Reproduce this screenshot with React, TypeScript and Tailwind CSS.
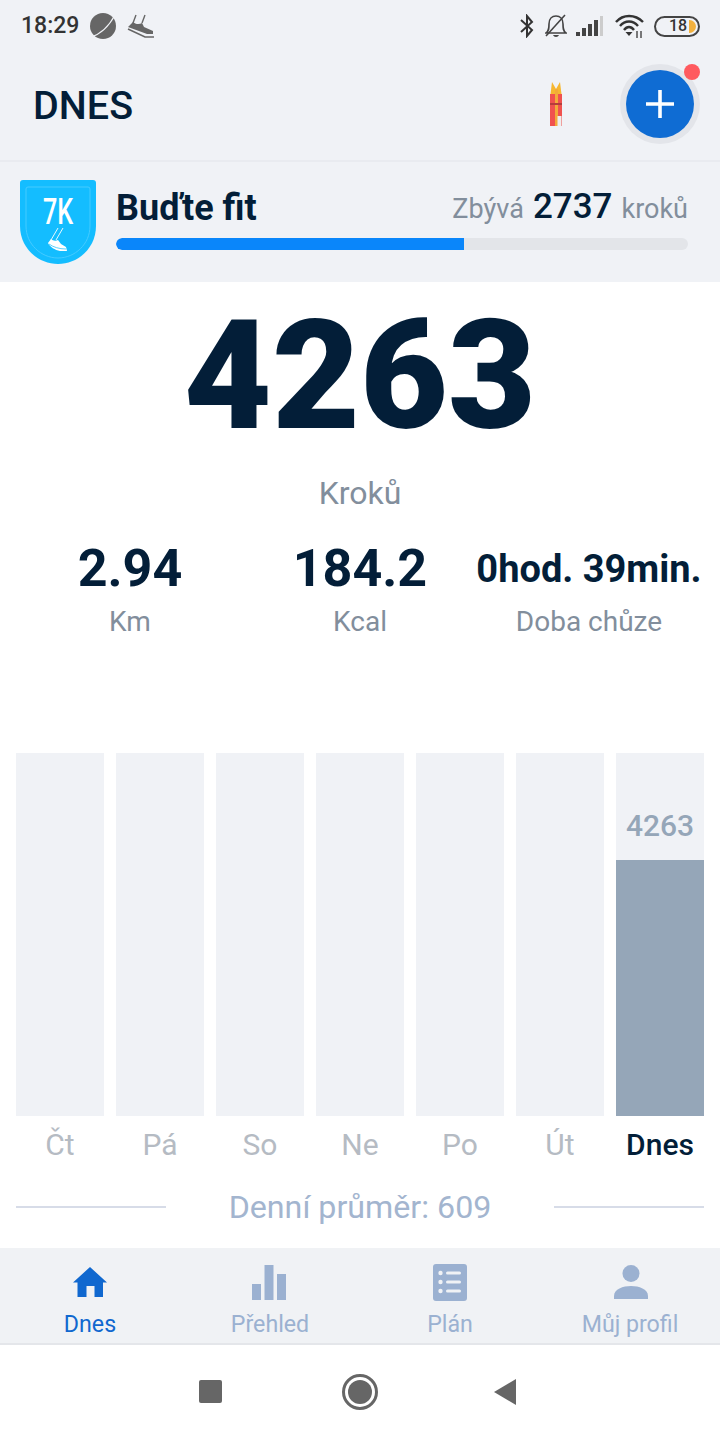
import React from "react";

const days = ["Čt", "Pá", "So", "Ne", "Po", "Út"];

function Planet() {
  return (
    <svg width="28" height="28" viewBox="0 0 28 28">
      <circle cx="14" cy="14" r="13" fill="#666" />
      <path d="M2 25 C12 22 20 14 26 3" stroke="#f0f2f6" strokeWidth="1.2" fill="none" />
    </svg>
  );
}

function Shoe() {
  return (
    <svg width="28" height="24" viewBox="0 0 28 24">
      <path d="M9 1 L6 9 M18 1 L15 9" stroke="#666" strokeWidth="1.4" fill="none" />
      <path d="M1 13 L6 8 C8 10 12 11 15 9 L17 13 L26 17 L26 20 L20 20 Z" fill="#666" />
      <path d="M1 15 L18 23 L27 23" stroke="#666" strokeWidth="1.6" fill="none" />
    </svg>
  );
}

function StatusRight() {
  return (
    <div className="flex items-center">
      <svg width="16" height="24" viewBox="0 0 16 24" className="mr-[10px]">
        <path d="M2 6 L13 16 L8 22 L8 2 L13 8 L2 18" stroke="#333" strokeWidth="2" fill="none" />
      </svg>
      <svg width="22" height="24" viewBox="0 0 22 24" className="mr-[9px]">
        <path d="M1 19 C4 17 4 14 4 10 C4 5 7 2 11 2 C15 2 18 5 18 10 C18 14 18 17 21 19 Z" stroke="#444" strokeWidth="1.6" fill="none" />
        <path d="M8 21 C9 23.5 13 23.5 14 21 Z" fill="#444" />
        <path d="M1 22 L20 1" stroke="#444" strokeWidth="1.6" />
      </svg>
      <svg width="28" height="20" viewBox="0 0 28 20" className="mr-[11px]">
        <rect x="0" y="16" width="4" height="4" fill="#444" />
        <rect x="6" y="12" width="4" height="8" fill="#444" />
        <rect x="12" y="8" width="4" height="12" fill="#444" />
        <rect x="18" y="4" width="4" height="16" fill="#444" />
        <rect x="24" y="0" width="3" height="20" fill="#ccc" />
      </svg>
      <svg width="29" height="24" viewBox="0 0 29 24" className="mr-[10px]">
        <path d="M1 8 C8 0 20 0 28 8 M5 12 C10 6 18 6 23 12 M9 16 C12 12 16 12 19 16" stroke="#333" strokeWidth="2.4" fill="none" />
        <path d="M10.5 18 L17.5 18 L14 22 Z" fill="#333" />
        <path d="M22 17 V24 M26 17 V24" stroke="#444" strokeWidth="1.4" />
      </svg>
      <div className="relative flex h-[21px] w-[46px] items-center rounded-full border-[2px] border-[#444] pl-[13px] text-[16px] font-medium leading-none text-[#333]">
        18
        <span className="absolute right-[2px] top-[2px] h-[13px] w-[7px] rounded-r-full bg-[#f3b13e]" />
      </div>
    </div>
  );
}

function Badge() {
  return (
    <div className="relative h-[84px] w-[76px]">
      <svg width="76" height="84" viewBox="0 0 76 84" className="absolute inset-0">
        <path d="M3 0 H73 Q76 0 76 3 V46 C76 68 58 84 38 84 C18 84 0 68 0 46 V3 Q0 0 3 0 Z" fill="#14bdff" />
        <path d="M8 7 H68 Q70 7 70 9 V46 C70 64 55 78 38 78 C21 78 6 64 6 46 V9 Q6 7 8 7 Z" stroke="#45cbff" strokeWidth="1" fill="none" />
        <path d="M43 48 L36 60 M38 48 L31 60" stroke="#fff" strokeWidth="0.9" fill="none" />
        <path d="M28 63 L31 59 C33 61 36 61 38 60 L41 64 L46 67 L47 71 L40 71 C35 70 30 67 28 63 Z" fill="#fff" />
        <path d="M29 64 C33 67 39 69 46 69" stroke="#14bdff" strokeWidth="0.7" fill="none" />
      </svg>
      <div className="relative flex justify-center pt-[12px] text-[37px] font-medium leading-[40px] text-white" style={{ transform: "scaleX(0.68)" }}>
        7K
      </div>
    </div>
  );
}

function Stat({ value, label, cls }: { value: string; label: string; cls: string }) {
  return (
    <div className="flex flex-col items-center">
      <div className={`font-bold leading-[56px] text-[#031e38] ${cls}`}>{value}</div>
      <div className="mt-[7px] text-[28px] leading-[36px] text-[#828e9c]">{label}</div>
    </div>
  );
}

function Tab({ label, active, icon }: { label: string; active?: boolean; icon: React.ReactNode }) {
  return (
    <div className="flex w-[180px] flex-col items-center pt-[14px]">
      <div className="flex h-[40px] items-center justify-center">{icon}</div>
      <div className={`mt-[7px] text-[23.2px] leading-[30px] ${active ? "text-[#1068cf]" : "text-[#9bb1d1]"}`}>{label}</div>
    </div>
  );
}

export default function App() {
  return (
    <div className="flex h-[1440px] w-[720px] flex-col overflow-hidden bg-white font-['Roboto',sans-serif]">
      <div className="h-[162px] border-b-2 border-[#e9ebf0] bg-[#f0f2f6]">
        <div className="flex h-[52px] items-center justify-between pl-[21px] pr-[20px]">
          <div className="flex items-center gap-[10px]">
            <span className="text-[23px] font-medium text-[#333]">18:29</span>
            <Planet />
            <Shoe />
          </div>
          <StatusRight />
        </div>
        <div className="flex h-[108px] items-center justify-between pb-[4px] pl-[33px] pr-[20px]">
          <div className="mt-[4px] text-[39.5px] font-medium text-[#031e38]">DNES</div>
          <div className="flex items-center gap-[58px]">
            <svg width="12" height="44" viewBox="0 0 12 44">
              <path d="M0.5 12 L2 0 L6 7 L10 0 L11.5 12 Z" fill="#f6b731" />
              <rect x="0" y="12" width="12" height="32" fill="#f0524f" />
              <rect x="5" y="7" width="3" height="37" fill="#f3a93a" />
              <rect x="0" y="21" width="12" height="2" fill="#b53d3b" />
              <rect x="7.5" y="34" width="4" height="10" fill="#eeeeee" />
            </svg>
            <div className="relative flex h-[80px] w-[80px] items-center justify-center rounded-full bg-[#e3e5ea]">
              <div className="flex h-[68px] w-[68px] items-center justify-center rounded-full bg-[#0f6cd3]">
                <svg width="28" height="28" viewBox="0 0 28 28">
                  <path d="M14 0 V28 M0 14 H28" stroke="#fff" strokeWidth="3.6" />
                </svg>
              </div>
              <span className="absolute right-0 top-0 h-[16px] w-[16px] rounded-full bg-[#ff5a5f]" />
            </div>
          </div>
        </div>
      </div>

      <div className="flex h-[120px] items-start bg-[#f0f2f6] pl-[20px] pr-[32px] pt-[18px]">
        <Badge />
        <div className="ml-[20px] flex-1">
          <div className="flex h-[58px] items-center justify-between">
            <div className="pb-[2px] text-[36px] font-bold leading-[52px] text-[#031e38]">Buďte fit</div>
            <div className="flex items-baseline pb-[4px] text-[27px] text-[#828e9c]">
              Zbývá
              <span className="mx-[9px] text-[35px] font-medium text-[#031e38]">2737</span>
              kroků
            </div>
          </div>
          <div className="h-[12px] overflow-hidden rounded-full bg-[#e3e5e9]">
            <div className="h-full w-[348px] rounded-l-full bg-[#0a86fa]" />
          </div>
        </div>
      </div>

      <div className="flex flex-1 flex-col bg-white">
        <div className="mt-[14px] text-center text-[152px] font-black leading-[160px] text-[#031e38]">4263</div>
        <div className="mt-[17px] text-center text-[32px] leading-[40px] text-[#828e9c]">Kroků</div>
        <div className="mt-[28px] grid grid-cols-[260px_200px_258px]">
          <Stat value="2.94" label="Km" cls="text-[52px]" />
          <Stat value="184.2" label="Kcal" cls="text-[52px]" />
          <Stat value="0hod. 39min." label="Doba chůze" cls="text-[38px] whitespace-nowrap" />
        </div>

        <div className="mt-[113px] flex gap-[12px] px-[16px]">
          {days.map((d) => (
            <div key={d} className="flex w-[88px] flex-col items-center">
              <div className="h-[363px] w-full bg-[#f0f2f6]" />
              <div className="mt-[11px] text-[30px] leading-[36px] text-[#b5bbc3]">{d}</div>
            </div>
          ))}
          <div className="flex w-[88px] flex-col items-center">
            <div className="flex h-[363px] w-full flex-col justify-end bg-[#f0f2f6]">
              <div className="text-center text-[30px] font-medium leading-[40px] text-[#95a6b8]">4263</div>
              <div className="mt-[14px] h-[256px] bg-[#95a6b8]" />
            </div>
            <div className="mt-[11px] text-[30px] font-medium leading-[36px] text-[#031e38]">Dnes</div>
          </div>
        </div>

        <div className="mt-[24px] flex items-center justify-between px-[16px]">
          <div className="h-[2px] w-[150px] bg-[#d7dce8]" />
          <div className="text-[32.2px] leading-[40px] text-[#a3b5cf]">Denní průměr: 609</div>
          <div className="h-[2px] w-[150px] bg-[#d7dce8]" />
        </div>
      </div>

      <div className="flex h-[97px] border-b-2 border-[#e4e6ea] bg-[#f0f2f5]">
        <Tab
          label="Dnes"
          active
          icon={
            <svg width="34" height="31" viewBox="0 0 34 31">
              <path d="M17 0 L34 15.5 H30 V30 H21.5 V19 H13.5 V30 H4.5 V15.5 H0 Z" fill="#1068cf" />
            </svg>
          }
        />
        <Tab
          label="Přehled"
          icon={
            <svg width="34" height="35" viewBox="0 0 34 35" className="mr-[2px]">
              <rect x="0" y="19" width="9" height="16" fill="#9bb1d1" />
              <rect x="12.5" y="0" width="9" height="35" fill="#9bb1d1" />
              <rect x="25" y="9" width="9" height="26" fill="#9bb1d1" />
            </svg>
          }
        />
        <Tab
          label="Plán"
          icon={
            <svg width="34" height="37" viewBox="0 0 34 37">
              <rect x="0" y="0" width="34" height="37" rx="3" fill="#9bb1d1" />
              <circle cx="7.5" cy="9" r="2.2" fill="#f0f2f5" />
              <circle cx="7.5" cy="18" r="2.2" fill="#f0f2f5" />
              <circle cx="7.5" cy="27" r="2.2" fill="#f0f2f5" />
              <rect x="13" y="7.5" width="15" height="3" rx="1.5" fill="#f0f2f5" />
              <rect x="13" y="16.5" width="15" height="3" rx="1.5" fill="#f0f2f5" />
              <rect x="13" y="25.5" width="15" height="3" rx="1.5" fill="#f0f2f5" />
            </svg>
          }
        />
        <Tab
          label="Můj profil"
          icon={
            <svg width="34" height="34" viewBox="0 0 34 34" className="ml-[2px]">
              <circle cx="17" cy="8.5" r="8.5" fill="#9bb1d1" />
              <path d="M0 34 V31 C0 24 9 21 17 21 C25 21 34 24 34 31 V34 Z" fill="#9bb1d1" />
            </svg>
          }
        />
      </div>

      <div className="flex h-[95px] items-center bg-white pb-[2px]">
        <div className="ml-[199px] h-[23px] w-[23px] rounded-[2px] bg-[#666]" />
        <div className="ml-[120px] flex h-[36px] w-[36px] items-center justify-center rounded-full border-[3px] border-[#666]">
          <div className="h-[24px] w-[24px] rounded-full bg-[#666]" />
        </div>
        <svg width="24" height="28" viewBox="0 0 24 28" className="ml-[115px]">
          <path d="M1 14 L23 1 V27 Z" fill="#666" />
        </svg>
      </div>
    </div>
  );
}
